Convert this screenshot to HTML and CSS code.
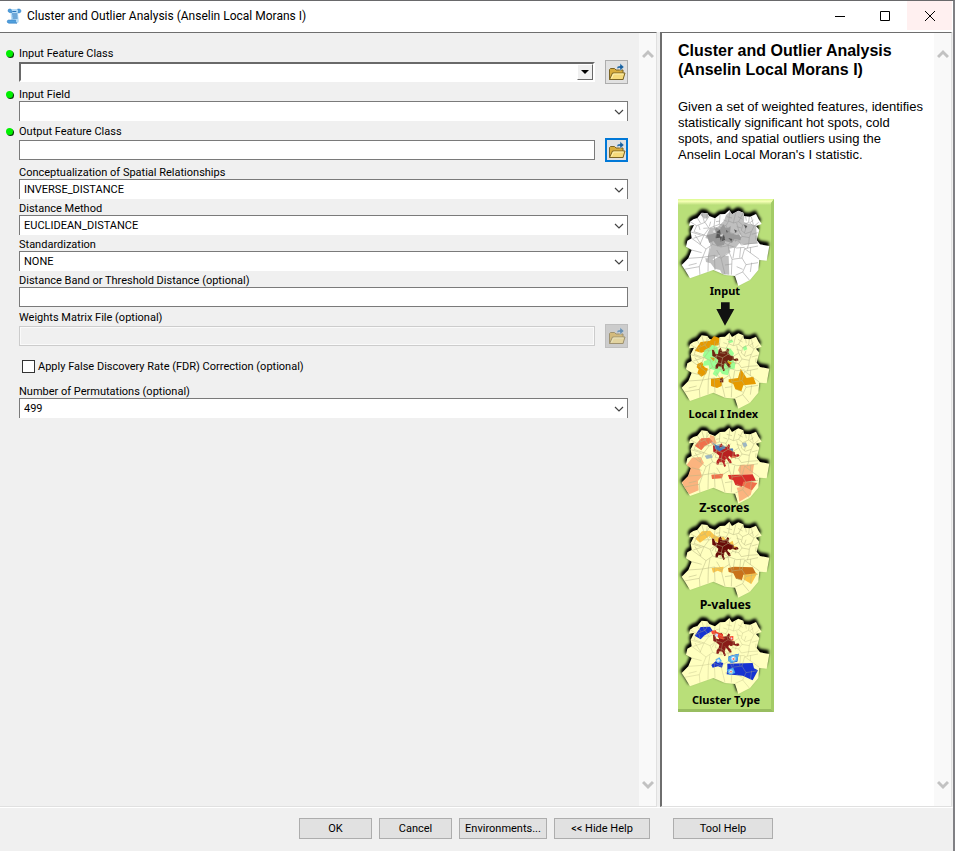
FILE: index.html
```
<!DOCTYPE html>
<html lang="en">
<head>
<meta charset="utf-8">
<title>Cluster and Outlier Analysis (Anselin Local Morans I)</title>
<link rel="stylesheet" href="styles.css">
</head>
<body>
<svg class="defs" aria-hidden="true">
  <symbol id="chev" viewBox="0 0 10 10"><path d="M1 3l4 4 4-4" fill="none" stroke="#444" stroke-width="1.2"/></symbol>
  <symbol id="up" viewBox="0 0 12 10"><path d="M1 8l5-5 5 5" fill="none" stroke="#c2c2c2" stroke-width="3"/></symbol>
  <symbol id="down" viewBox="0 0 12 10"><path d="M1 2l5 5 5-5" fill="none" stroke="#c2c2c2" stroke-width="3"/></symbol>
  <symbol id="folder" viewBox="0 0 18 18">
    <path d="M1.500 16.500V6.500l1-1h4l1.500 1.500h7v9.500z" fill="#d9ad3c" stroke="#7b6425"/>
    <path d="M1.500 16.500l3-6.500h12.500l-2 6.500z" fill="#f5da7b" stroke="#7b6425"/>
    <path d="M3.500 15.500l2-4.500h10" fill="none" stroke="#fff2b4"/>
    <path d="M9 5.500c0-2 1-2.500 3-2.500V.5l4 3.500-4 3.500V5c-1.500 0-2 .5-3 .5z" fill="#17609f" stroke="#d4e6f4" stroke-width=".4"/>
  </symbol>
</svg>
<div class="window">
  <header class="titlebar">
    <svg class="app-icon" viewBox="0 0 16 16" aria-hidden="true">
      <path d="M3.500 1h9.500c2.500 0 2.500 4 0 4l-1 .3.800 7.200c.2 1.700-.8 2.700-2 2.700H3C.8 15.200.8 12 3 12h2.300L4.500 5C1.800 5 1.500 1 3.500 1z" fill="#b5dcf7"/>
      <path d="M3.500 1c-2 0-2 3.500.5 3.500h2L5 1.200zM12 4.800h1.300c2.200 0 2.200-3.800-.3-3.800h-1.500c1.200 1 1.200 2.600.5 3.800zM2.700 12c-2 0-2 3.200.3 3.200h8c-1.500-.5-1.700-1.700-1.400-3.200z" fill="#4f9fdd" stroke="#2d78bd" stroke-width=".5"/>
      <path d="M6.300 3.500h4M6 6h5.300M6.300 8h5.200M6.600 10h5" stroke="#2874b9" stroke-width="1"/>
    </svg>
    <h1>Cluster and Outlier Analysis (Anselin Local Morans I)</h1>
    <button class="caption" type="button" aria-label="Minimize"><svg viewBox="0 0 10 10"><path d="M0 5.500h10" stroke="#000"/></svg></button>
    <button class="caption" type="button" aria-label="Maximize"><svg viewBox="0 0 10 10"><path d="M.5.5h9v9h-9z" fill="none" stroke="#000"/></svg></button>
    <button class="caption close" type="button" aria-label="Close"><svg viewBox="0 0 10 10"><path d="M0 0l10 10M10 0L0 10" stroke="#000"/></svg></button>
  </header>

  <main class="content">
    <section class="pane">
      <form class="form">
        <div class="field browse required">
          <label for="f1">Input Feature Class</label>
          <div class="row">
            <div class="combo classic"><select id="f1"><option></option></select><span class="drop"></span></div>
            <button class="open" type="button" aria-label="Browse"><svg><use href="#folder"/></svg></button>
          </div>
        </div>
        <div class="field required">
          <label for="f2">Input Field</label>
          <div class="combo"><select id="f2"><option></option></select><svg><use href="#chev"/></svg></div>
        </div>
        <div class="field browse required">
          <label for="f3">Output Feature Class</label>
          <div class="row">
            <input id="f3" type="text">
            <button class="open focused" type="button" aria-label="Browse"><svg><use href="#folder"/></svg></button>
          </div>
        </div>
        <div class="field">
          <label for="f4">Conceptualization of Spatial Relationships</label>
          <div class="combo"><select id="f4"><option>INVERSE_DISTANCE</option></select><svg><use href="#chev"/></svg></div>
        </div>
        <div class="field">
          <label for="f5">Distance Method</label>
          <div class="combo"><select id="f5"><option>EUCLIDEAN_DISTANCE</option></select><svg><use href="#chev"/></svg></div>
        </div>
        <div class="field">
          <label for="f6">Standardization</label>
          <div class="combo"><select id="f6"><option>NONE</option></select><svg><use href="#chev"/></svg></div>
        </div>
        <div class="field">
          <label for="f7">Distance Band or Threshold Distance (optional)</label>
          <input id="f7" type="text">
        </div>
        <div class="field browse">
          <label for="f8">Weights Matrix File (optional)</label>
          <div class="row">
            <input id="f8" type="text" disabled>
            <button class="open" type="button" aria-label="Browse" disabled><svg><use href="#folder"/></svg></button>
          </div>
        </div>
        <div class="check">
          <input id="f9" type="checkbox">
          <label for="f9">Apply False Discovery Rate (FDR) Correction (optional)</label>
        </div>
        <div class="field">
          <label for="f10">Number of Permutations (optional)</label>
          <div class="combo"><select id="f10"><option>499</option></select><svg><use href="#chev"/></svg></div>
        </div>
      </form>
      <div class="scrollbar"><svg><use href="#up"/></svg><svg><use href="#down"/></svg></div>
    </section>

    <aside class="pane help">
      <div class="help-text">
        <h2>Cluster and Outlier Analysis (Anselin Local Morans I)</h2>
        <p>Given a set of weighted features, identifies statistically significant hot spots, cold spots, and spatial outliers using the Anselin Local Moran's I statistic.</p>
        <svg class="diagram" viewBox="24 0 288 1539" role="img" aria-label="Tool illustration">
          <defs>
            <path id="outline" d="M60 95L70 88 82 84 95 68 112 70 118 78 135 85 150 73 165 72 178 60 186 73 205 62 220 68 222 78 240 80 258 72 266 88 275 102 258 108 268 120 260 150 270 163 298 168 290 212 268 210 265 240 240 270 205 288 195 258 165 255 130 240 60 265 45 240 35 225 55 205 65 180 48 170 52 152 65 145 62 125 72 105 57 107z"/>
            <clipPath id="clip"><use href="#outline"/></clipPath>
            <filter id="soft" x="-20%" y="-20%" width="140%" height="140%"><feGaussianBlur stdDeviation="5"/></filter>
            <linearGradient id="top" x1="0" y1="0" x2="0" y2="1"><stop offset="0" stop-color="#dcfa91"/><stop offset=".4" stop-color="#f5ffb4"/><stop offset="1" stop-color="#b9df79"/></linearGradient>
            <path id="mesh" fill="none" d="M60 95l20 12 25-10 12-18M80 107l-8 18 30 10 15-20-12-18M102 135l-12 28-25-18M90 163l18 14-10 25-43 3M98 202l-10 28-45 8M88 230l2 28M98 202l35-6 2 44M133 196l20 8 12 50M153 204l25-16 8 20-2 46M186 208l30-4 12 20 36-6M216 204l8-28 40-8M228 224l-10 22 20 24M218 246l-22 10M224 176l44 32M65 180l30 8M108 177l20-14 25 8 25-5 22 8 24-2M128 163l-8-20-18-8M120 143l20-14-8-20-15 6M140 129l18 6 16-10-6-18-20-4-16 6M132 109l3-24M148 103l2-28M168 107l8-14 4-32M176 93l14 6 8-34M190 99l16-4 14-27M174 125l16 6 16-10-6-22M206 95l12 10 18-8 2-18M218 105l-4 16 12 10 18-6 8-16M236 97l16 12 14-12M190 131l-2 18 18 4 10-14-10-18M216 139l22 4 6-18M238 143l-2 18-22 4-8-12M236 161l28-2M158 135l-4 18 20 12 14-16M140 129l-4 20 18 4M154 153l-1 18M174 165l4 23M236 161l-4 14M82 84l10 16M95 68l8 28M112 70l-2 18M225 70l4 22M244 80l6 24M60 125l32 10M70 145l30-10M80 220l-24 6M120 170l-5 30M115 200l-1 45M150 120l16 2M148 111l14 6 12-3M182 108l-8 10M200 110l14 4M228 114l-5 15M245 133l18-5M200 140l-4 15M164 145l8 10M145 160l9 7M134 136l-8 12M122 95l-4 14M160 90l12 4M138 95l12-2M170 80l16 4M204 80l14 8M212 173l-3 30M194 174l-5 30M140 180l12 20M242 172l-1 17M245 218l-4 28M200 230l18 8M165 225l20-3M258 137l-1 12M250 90l-10 8M100 115l16-1M90 120l-4-14M75 135l18 28"/>
            <g id="land"><use href="#outline" x="-1" y="-11" fill="#000" filter="url(#soft)"/><use href="#outline" x="-4" y="-6" fill="#000" filter="url(#soft)"/><use href="#outline"/></g>
            <path id="core" d="M126 109l6 2 4 10 8 2 2-14 6-6 5 12 10-2 6-8 4 4-2 10 8 8 8 2 1 8 10-2 4 6-8 3-10-4-8 4-6-4-2 6 8 8 2 8-6 1-8-12-4-2-3 12 4 10-5 3-6-14-8-1-4 8-6-1 1-10 6-8 2-8-10-8-8-4z"/>
          </defs>
          <path d="M24 0h288v1539H24z" fill="#b9df79"/>
          <path d="M24 0h288l-12 18H24z" fill="url(#top)"/>
          <path d="M312 0v1539l-9-9V12z" fill="#a3cb66"/>
          <path d="M24 1539h288l-9-9H24z" fill="#98bd60"/>

          <g transform="translate(0 -27)">
            <use href="#land" fill="#fff"/>
            <g clip-path="url(#clip)">
              <path d="M85 70l28-4 3 16-12 4zM168 75l18-15 38 6-2 30 16 6 20 4 4 54-38 4-16-4-10 12-20 4 4 10-14 6-10 14-8-10-14 4-12 14-12-6 10-36-4-24-12-4 14-30 24-4 18-18zM106 204l24 6 22-14 24 2 2 56-22-2-6-12-16-4-12-16-14-4z" fill="#bfbfbf"/>
              <path d="M110 135l20-4 8-18 12 4 10-14 8 12 14-4-2 18 20 6 14-4-2 20-18-4-8 12-20-6-4 12-20 4-12-16-12 6z" fill="#999"/>
              <path d="M140 125l10-6 2 14 10 2 4 14-14 6-2-12-14 2zM168 120l8 4-6 6zM175 144l12 3-2 8zM222 104l10 4-5 8zM192 118l9 4-4 8z" fill="#555"/>
              <path d="M150 134l8-3 2 7-8 2zM128 122l8-2 2 8-7 1zM206 132l10 2-3 8z" fill="#dedede"/>
              <use href="#mesh" stroke="#9a9a9a" stroke-width="1.700"/>
            </g>
          </g>
          <text x="165" y="288">Input</text>
          <path d="M153 310h26v20h14l-28 50-26-50h14z" fill="#111"/>

          <g transform="translate(0 363)">
            <g transform="translate(0 -22)"><use href="#land" fill="#ffffbf"/></g>
            <path d="M74 92l18-26 28-4 12-14 16 6-2 22-18 2-16 14-18 6zM82 132l14-6 8 16 10 4-6 16-14 8-12-10 4-12-6-6zM123 176l28-3 8-3-4 28-14 6-18-6zM176 178l28-4 8-28 18 28 20-4 8 22-38 4-6 18-18-6-6-16-14-6zM162 128l20 2-8 12z" fill="#e69a00"/>
            <path d="M104 90l16-8 6-8 16 6 4 20 10 2 6 10 10-8-4-22 14 4 10 14-6 16 10 14-2 16-14 2-6 18-18-4-6-8-10 16-12-8 6-12-16-4-2-10-18 2 4-14 10-4-14-12zM174 64l12-6 4 8-12 4zM218 82l10-6 4 12-10 4z" fill="#9cff94"/>
            <path d="M146 106l12-4 4 12-10 8zM120 112l14 2-2 10zM172 122l14 6-8 10z" fill="#e69a00"/>
            <use href="#core" y="-20" fill="#702412"/>
            <path d="M150 175h10v12h-10z" fill="#702412"/>
            <g transform="translate(0 -22)" clip-path="url(#clip)"><use href="#mesh" stroke="#b7b684" stroke-width="1.500"/></g>
          </g>
          <text x="160" y="657">Local I Index</text>

          <g transform="translate(0 648)">
            <g transform="translate(0 -22)"><use href="#land" fill="#ffffbf"/></g>
            <path d="M66 128l26-2 10 18-14 16 8 24-12 14 2 28-28 12-14-20-8-16 18-18 8-24-12-10zM120 60l12 4 8 20-12 6-10-10zM210 150l42-2-4 28-36 2-8-12zM200 218l50-8-8 30-34 20-4-30z" fill="#fbb47f"/>
            <path d="M74 92l20-22 24-2 10 12-24 14-10 12zM124 179l36-3-4 14-30 2zM218 196l44 8-16 22-30-14zM178 122l20-2v8l-14 2z" fill="#ef704b"/>
            <path d="M122 78l16 12 14-4 18 10-6 12-22-4zM104 122l20-4 4 10-18 4zM174 98l16 4-2 14-10-2zM216 84l12-2 4 10-10 6z" fill="#9db7c4"/>
            <path d="M128 84l12 8 10 2 16 2-8 14-18-4 2-8zM180 102l8-2 1 10-8 2z" fill="#4374b7"/>
            <use href="#core" y="-18" x="3" fill="#b82020"/>
            <path d="M174 180l74-2 10 20-38 2-4 16-20-6-6-14-12-4z" fill="#d8302a"/>
            <path d="M135 88l12 10 14-6 6 7-18 10-15-8z" fill="#4374b7"/>
            <g transform="translate(0 -22)" clip-path="url(#clip)"><use href="#mesh" stroke="#b7b684" stroke-width="1.500"/></g>
          </g>
          <text class="wide" x="163" y="939">Z-scores</text>

          <g transform="translate(0 933)">
            <g transform="translate(0 -25)"><use href="#land" fill="#ffffbf"/></g>
            <path d="M76 86l20-22 24-2 12 12 18 10 10-4 10 12-18 10-22-12-12-12-28 20zM125 174l36-4-4 18-14-6-14 6zM178 98l10-6 4 16 10 2-4 10-14-4zM222 188l40 2-18 32-24-14z" fill="#fac54b"/>
            <path d="M174 174l18-4 56 2 10 18-38 4-4 16-18-4-8-16-14-4z" fill="#c9721b"/>
            <use href="#core" y="-24" fill="#680c08"/>
            <g transform="translate(0 -25)" clip-path="url(#clip)"><use href="#mesh" stroke="#b7b684" stroke-width="1.500"/></g>
          </g>
          <text class="wide" x="166" y="1230">P-values</text>

          <g transform="translate(0 1218)">
            <g transform="translate(0 -21)"><use href="#land" fill="#ffffbf"/></g>
            <path d="M74 92l18-26 28-1 8 12-24 14-12 12zM124 180l14-12 22 6-4 14-12-4-16 4zM172 176l76-2 4 16 12 6-16 30-30-14-48-4 2-18zM176 154l30-8-4 24-20 4z" fill="#1734d2"/>
            <path d="M174 155l32-9-4 22-18 6-10-6zM170 194l20-6 6 16-18 6zM136 164l12-7 8 12-14 4z" fill="#49a8ed"/>
            <g fill="#f9f6ff" stroke="#7ac9fa" stroke-width="3"><circle cx="190" cy="161" r="7"/><circle cx="183" cy="200" r="6"/><circle cx="145" cy="167" r="5"/></g>
            <path d="M188 160h5v4h-5zM181 198h4v4h-4zM123 78l14-3 3 8 16 2 4 8-12 8-10-10-12-4zM180 94l10-1v14l-9-3z" fill="#fb4d37"/>
            <use href="#core" y="-20" x="3" fill="#891c18"/>
            <path d="M134 78l24 10 4 16-14-4-8-12-10-4z" fill="#ef3d28"/>
            <path d="M137 85l8 3-3 9-7-4zM184 96l4 5-6 3z" fill="#cfd8ff"/>
            <g transform="translate(0 -21)" clip-path="url(#clip)"><use href="#mesh" stroke="#b7b684" stroke-opacity=".7" stroke-width="1.500"/></g>
          </g>
          <text x="168" y="1515">Cluster Type</text>
        </svg>
      </div>
      <div class="scrollbar"><svg><use href="#up"/></svg><svg><use href="#down"/></svg></div>
    </aside>
  </main>

  <footer class="actions">
    <div class="main-actions">
      <button class="push" type="button">OK</button>
      <button class="push" type="button">Cancel</button>
      <button class="push env" type="button">Environments...</button>
      <button class="push hide" type="button">&lt;&lt; Hide Help</button>
    </div>
    <button class="push tool" type="button">Tool Help</button>
  </footer>
</div>
</body>
</html>
```
FILE: styles.css
```
* { box-sizing: border-box; }
body {
  margin: 0;
  background: #f0f0f0;
  color: #000;
  font: 11px/14px Roboto, sans-serif;
}
.defs { position: absolute; width: 0; height: 0; }
button, input, select { font: inherit; color: inherit; margin: 0; border-radius: 0; }
svg { display: block; }

.window {
  display: flex;
  flex-direction: column;
  min-height: 100vh;
  border-top: 1px solid #69696b;
  border-right: 2px solid #808084;
}
.titlebar {
  display: flex;
  align-items: center;
  height: 31px;
  padding: 0 1px 2px 6px;
  background: #fff;
}
.app-icon { width: 16px; height: 16px; }
.titlebar h1 {
  flex: 1;
  margin: 0 0 0 5px;
  font: 12px/16px Roboto, sans-serif;
}
.caption {
  display: grid;
  place-items: center;
  width: 45px;
  height: 29px;
  padding: 0;
  border: 0;
  background: #fff;
}
.caption svg { width: 10px; height: 10px; }
.caption.close { background: #fff0f0; }

.content {
  flex: 1;
  display: grid;
  grid-template-columns: minmax(0, 1fr) 292px;
  gap: 3px;
  padding-right: 1px;
}
.pane {
  display: flex;
  border-top: 1px solid #6e6e6e;
  border-right: 1px solid #e0e0e0;
  border-bottom: 1px solid #e0e0e0;
}
.form { flex: 1; min-width: 0; padding: 13px 11px 0 19px; }
.scrollbar {
  display: flex;
  flex-direction: column;
  justify-content: space-between;
  align-items: center;
  width: 17px;
  padding: 16px 0;
  background: #f9f9f9;
}
.scrollbar svg { width: 12px; height: 10px; }

.field { margin: 2px 0; }
.field.browse { margin: 3px 0; }
.field:first-child { margin-top: 0; }
.field label { display: block; position: relative; height: 14px; padding-top: 1px; }
.required label::before {
  content: "";
  position: absolute;
  left: -13px;
  top: 4px;
  width: 7px;
  height: 7px;
  border-radius: 50%;
  background: #00f000;
  box-shadow: 1px 1px 0 #063806;
}
.row { display: flex; align-items: center; gap: 10px; }
.row > :first-child { flex: 1; min-width: 0; }
input[type="text"] {
  display: block;
  width: 100%;
  height: 20px;
  padding: 0 4px;
  border: 1px solid #7a7a7a;
  background: #fff;
}
input[type="text"]:disabled {
  border-color: #ccc;
  background: #f0f0f0;
  box-shadow: inset 0 0 0 1px #fafafa;
}
.combo { position: relative; }
.combo select {
  display: block;
  width: 100%;
  height: 20px;
  padding: 0 20px 0 4px;
  border: 1px solid #7a7a7a;
  border-bottom: 0;
  background: #fff;
  appearance: none;
}
.combo svg {
  position: absolute;
  right: 4px;
  top: 6px;
  width: 10px;
  height: 10px;
  pointer-events: none;
}
.combo.classic select {
  border: 2px solid #696969;
  border-color: #696969 #fff #fff #696969;
}
.drop {
  position: absolute;
  right: 2px;
  top: 2px;
  width: 16px;
  height: 16px;
  border: 1px solid #fff;
  border-right-color: #696969;
  border-bottom-color: #696969;
  background: #f0f0f0;
  pointer-events: none;
}
.drop::after {
  content: "";
  position: absolute;
  left: 3px;
  top: 5px;
  border: 4px solid transparent;
  border-top-color: #000;
  border-bottom: 0;
}
.open {
  display: grid;
  place-items: center;
  width: 23px;
  height: 24px;
  padding: 0;
  border: 1px solid #adadad;
  background: #e1e1e1;
}
.open svg { width: 18px; height: 18px; }
.open.focused { border: 2px solid #0078d7; }
.open:disabled { background: #ccc; border-color: #bfbfbf; }
.open:disabled svg { opacity: .55; }
.check { display: flex; align-items: center; gap: 3px; height: 31px; padding-left: 3px; }
.check input {
  appearance: none;
  width: 13px;
  height: 13px;
  border: 1px solid #333;
  background: #fff;
}

.help { background: #fff; border-left: 2px solid #6e6e6e; }
.help-text {
  flex: 1;
  min-width: 0;
  padding: 8px 9px 0 16px;
  font-family: "Liberation Sans", Arial, sans-serif;
}
.help-text h2 { margin: 0; font-size: 16px; line-height: 19px; }
.help-text p { margin: 20px 0 36px; font-size: 13px; line-height: 16px; }
.diagram { width: 96px; height: auto; }
.diagram text {
  font: bold 33px "Noto Sans", sans-serif;
  text-anchor: middle;
}
.diagram .wide { font-size: 37px; }

.actions {
  display: grid;
  grid-template-columns: minmax(0, 1fr) 292px;
  gap: 3px;
  padding: 10px 1px 12px 0;
  border-top: 1px solid #fff;
}
.main-actions { display: flex; justify-content: flex-end; gap: 7px; padding-right: 7px; }
.push {
  min-width: 73px;
  height: 21px;
  padding: 0 3px;
  border: 1px solid #adadad;
  background: #e1e1e1;
}
.push.env { width: 88px; }
.push.hide { width: 96px; }
.push.tool { width: 100px; margin-left: 13px; }
```
